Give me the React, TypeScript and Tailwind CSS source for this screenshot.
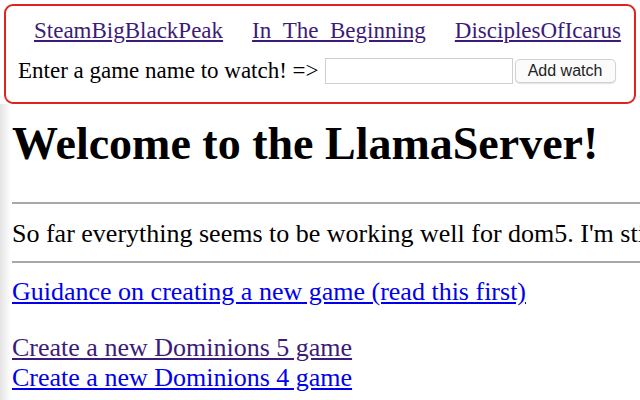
export default function App() {
    const watched = ['SteamBigBlackPeak', 'In_The_Beginning', 'DisciplesOfIcarus'];

    return (
        <div className="w-[640px] h-[400px] overflow-hidden bg-white text-black font-['Liberation_Serif',serif]">
            <div className="mx-[4px] mt-[4px] border-2 border-[#e0231f] rounded-[9px] pl-[12px] pr-[10px] pt-[12px] pb-[18px] text-[23px] leading-[26px]">
                <div className="flex gap-[29px] pl-[16px]">
                    {watched.map((name) => (
                        <a key={name} href="#" className="text-[#3c1b78] underline whitespace-nowrap">
                            {name}
                        </a>
                    ))}
                </div>
                <div className="flex items-center mt-[14px]">
                    <span className="whitespace-nowrap leading-[22px]">Enter a game name to watch! =&gt;</span>
                    <input
                        type="text"
                        className="ml-[6px] w-[188px] h-[26px] border border-[#cfcfcf] bg-white outline-none"
                    />
                    <button className="ml-[2px] h-[24px] w-[101px] border border-[#d2d2d2] rounded-[5px] bg-[#fbfbfb] font-['Liberation_Sans',sans-serif] text-[16px] leading-[20px] text-[#222] shadow-[0_1px_1px_rgba(0,0,0,0.12)]">
                        Add watch
                    </button>
                </div>
            </div>

            <div className="bg-[linear-gradient(to_right,#e4e4e4,#ffffff_11px)] px-[12px] pt-[14px] h-[400px] text-[26px] leading-[30px]">
                <h1 className="font-bold text-[46px] leading-[52px] whitespace-nowrap">Welcome to the LlamaServer!</h1>
                <hr className="mt-[32px] w-[700px] border-t-2 border-[#a8a8a8]" />
                <p className="mt-[15px] whitespace-nowrap">
                    So far everything seems to be working well for dom5. I'm still working on a few things.
                </p>
                <hr className="mt-[12px] w-[700px] border-t-2 border-[#a8a8a8]" />
                <p className="mt-[14px] whitespace-nowrap">
                    <a href="#" className="text-[#0000ee] underline">Guidance on creating a new game (read this first)</a>
                </p>
                <div className="mt-[26px] flex flex-col">
                    <a href="#" className="text-[#3c1b78] underline w-fit whitespace-nowrap">Create a new Dominions 5 game</a>
                    <a href="#" className="text-[#0000ee] underline w-fit whitespace-nowrap">Create a new Dominions 4 game</a>
                    <a href="#" className="mt-[4px] text-[#8c8cf0] underline w-fit whitespace-nowrap">View the list of games</a>
                </div>
            </div>
        </div>
    );
}
